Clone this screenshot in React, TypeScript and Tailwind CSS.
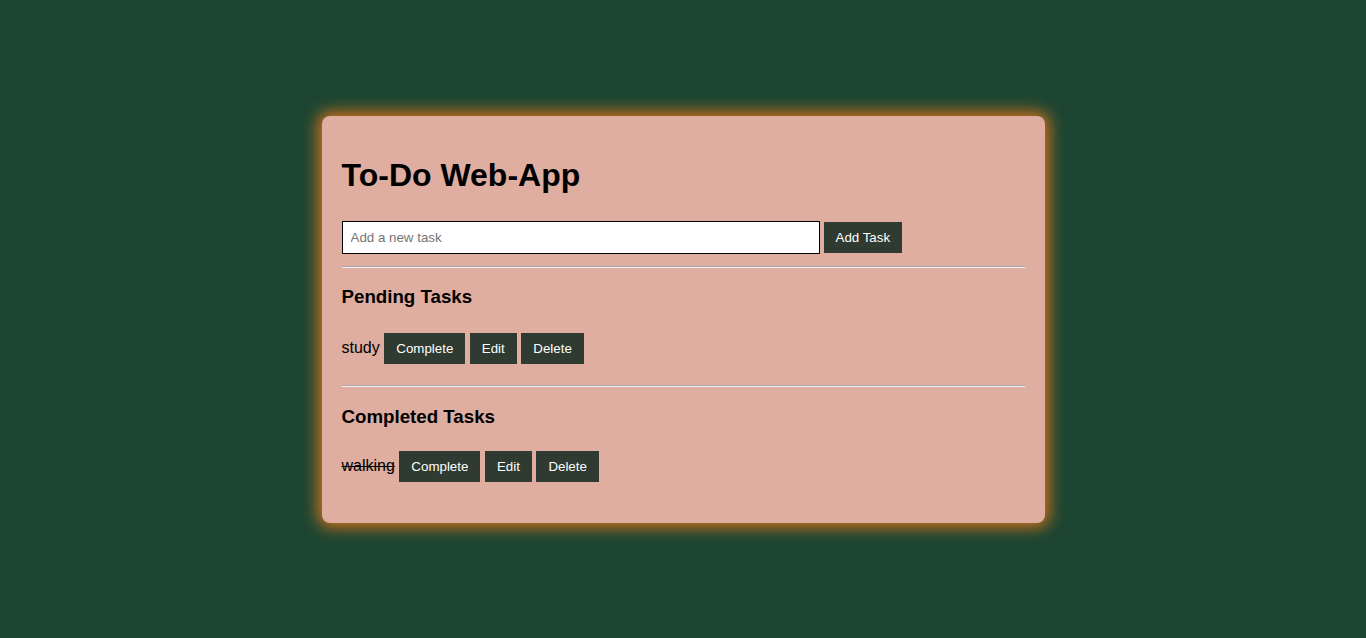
const btn =
  "bg-[#2f3a30] px-3 py-2 text-[13.33px] leading-[15px] text-white";

function TaskRow({ label, done }: { label: string; done?: boolean }) {
  return (
    <div className="flex items-baseline gap-[4.5px]">
      <span className={done ? "text-base line-through" : "text-base"}>{label}</span>
      <button className={btn}>Complete</button>
      <button className={btn}>Edit</button>
      <button className={btn}>Delete</button>
    </div>
  );
}

function Rule() {
  return (
    <div>
      <div className="h-px bg-[#a8a8a8]" />
      <div className="h-px bg-[#f2f2f2]" />
    </div>
  );
}

export default function App() {
  return (
    <div
      className="flex min-h-screen items-center justify-center bg-[#1c4532] text-black"
      style={{ fontFamily: '"Liberation Sans", Arial, sans-serif' }}
    >
      <div className="box-content w-[683px] rounded-lg bg-[#dfaea0] p-5 shadow-[0_0_16px_4px_#d5731c]">
        <h1 className="mt-[21px] mb-[27px] text-[32px] font-bold leading-[37px]">To-Do Web-App</h1>

        <div className="flex items-center gap-1">
          <input
            type="text"
            placeholder="Add a new task"
            className="w-[478px] border border-black bg-white px-2 py-2 text-[13.33px] leading-[15px] placeholder:text-[#757575]"
          />
          <button className={btn}>Add Task</button>
        </div>

        <div className="mt-[12px]">
          <Rule />
        </div>

        <h3 className="mt-[18px] text-[18.72px] font-bold leading-[22px]">Pending Tasks</h3>
        <div className="mt-[25px]">
          <TaskRow label="study" />
        </div>

        <div className="mt-[21px]">
          <Rule />
        </div>

        <h3 className="mt-[19px] text-[18.72px] font-bold leading-[22px]">Completed Tasks</h3>
        <div className="mt-[23px] mb-[21px]">
          <TaskRow label="walking" done />
        </div>
      </div>
    </div>
  );
}
